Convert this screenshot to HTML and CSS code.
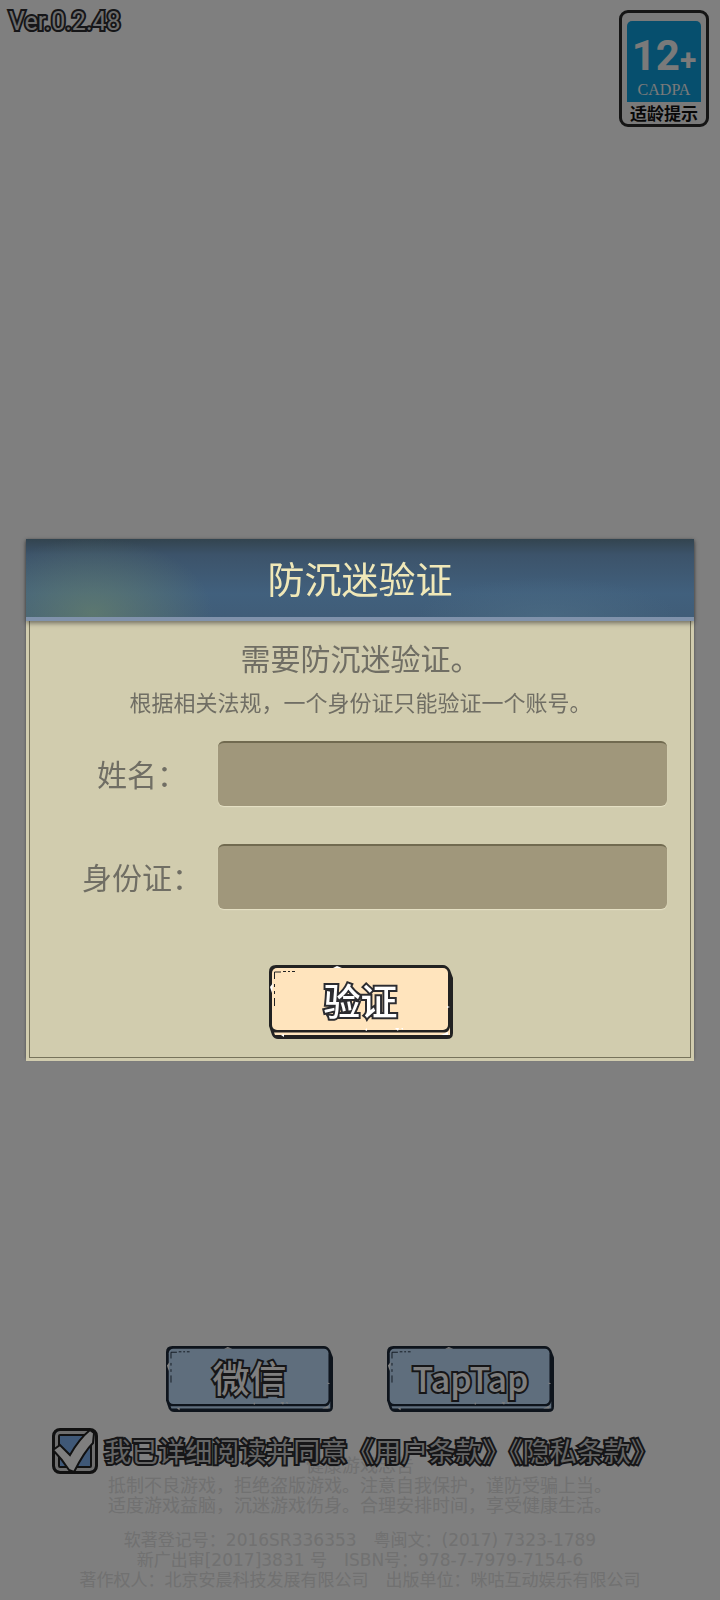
FILE: index.html
```html
<!DOCTYPE html>
<html lang="zh-CN">

<head>
    <meta charset="UTF-8">
    <meta name="viewport" content="width=device-width, initial-scale=1.0">
    <title>防沉迷验证</title>
    <link rel="stylesheet" href="styles.css">
</head>

<body>
    <!-- Shared button plate -->
    <svg class="defs" width="0" height="0" aria-hidden="true">
        <symbol id="plate" viewBox="0 0 184 74" preserveAspectRatio="none">
            <path class="plate-edge" d="M7 0H174Q178 0 181 5L184 13V68Q184 74 178 74H9Q5 74 3 70L0 61V7Q0 0 7 0Z" />
            <path class="plate-lip" d="M5 67.500H176Q180 67 181 62V70H6Z" />
            <rect class="plate-face" x="3" y="3" width="176" height="62" rx="5" />
            <path class="plate-scratch" d="M5.500 41V33M5.500 29V26M5.500 22V19M5.500 14V7H12M14 6.500H17M19 6.500H21M23 6.500H26" />
            <path class="plate-nick" d="M64 3L68 1L73 3ZM1 22L4 18L3 28ZM96 65L98 63V66ZM126 63L130 63L129 66ZM132 63H134V65ZM12 70L15 69V72ZM172 70L179 67V70ZM178 41L181 42L178 43Z" />
        </symbol>
    </svg>

    <div class="page">
        <header class="top-bar">
            <span class="version outlined">Ver.0.2.48</span>
            <div class="age-badge">
                <div class="age-blue">
                    <span class="age-number">12<small>+</small></span>
                    <span class="age-org">CADPA</span>
                </div>
                <span class="age-tip">适龄提示</span>
            </div>
        </header>

        <footer class="bottom">
            <div class="login-buttons">
                <button type="button" class="plate-button login">
                    <svg aria-hidden="true"><use href="#plate" /></svg>
                    <span class="outlined">微信</span>
                </button>
                <button type="button" class="plate-button login">
                    <svg aria-hidden="true"><use href="#plate" /></svg>
                    <span class="outlined latin">TapTap</span>
                </button>
            </div>

            <div class="agreement">
                <span class="tick">
                    <input type="checkbox" id="agree" checked>
                    <svg viewBox="0 0 46 46" aria-hidden="true">
                        <path d="M1 22L8 17L18 27Q27 11 38 2L42 5L41 15Q32 24 22 44L17 42Q10 31 1 22Z" />
                    </svg>
                </span>
                <label for="agree" class="outlined">我已详细阅读并同意<a href="#terms">《用户条款》</a><a href="#privacy">《隐私条款》</a></label>
            </div>

            <!-- Notices required by the regulator -->
            <div class="notice">
                <p class="notice-title">健康游戏忠告</p>
                <p>抵制不良游戏，拒绝盗版游戏。注意自我保护，谨防受骗上当。</p>
                <p>适度游戏益脑，沉迷游戏伤身。合理安排时间，享受健康生活。</p>
            </div>
            <div class="notice registry">
                <p>软著登记号：2016SR336353　粤闽文：(2017) 7323-1789</p>
                <p>新广出审[2017]3831 号　ISBN号：978-7-7979-7154-6</p>
                <p>著作权人：北京安晨科技发展有限公司　出版单位：咪咕互动娱乐有限公司</p>
            </div>
        </footer>
    </div>

    <!-- Verification popup -->
    <div class="overlay">
        <form class="popup">
            <h1 class="popup-title">防沉迷验证</h1>
            <div class="popup-body">
                <p class="lead">需要防沉迷验证。</p>
                <p class="hint">根据相关法规，一个身份证只能验证一个账号。</p>
                <div class="field">
                    <label for="name">姓名：</label>
                    <input type="text" id="name">
                </div>
                <div class="field">
                    <label for="id-card">身份证：</label>
                    <input type="text" id="id-card">
                </div>
                <button type="button" class="plate-button verify">
                    <svg aria-hidden="true"><use href="#plate" /></svg>
                    <span class="outlined">验证</span>
                </button>
            </div>
        </form>
    </div>
</body>

</html>
```
FILE: styles.css
```css
* {
    box-sizing: border-box;
}

body {
    margin: 0;
    background: #fff;
    font-family: "Noto Sans CJK SC", sans-serif;
}

p,
h1 {
    margin: 0;
}

.defs {
    position: absolute;
}

.page {
    display: flex;
    flex-direction: column;
    justify-content: space-between;
    min-height: 100vh;
}

/* White text with a dark outline */
.outlined {
    color: #fff;
    -webkit-text-stroke: 4px #2c2c30;
    paint-order: stroke fill;
}

/* Top bar */
.top-bar {
    display: flex;
    justify-content: space-between;
    align-items: flex-start;
    padding: 10px 11px 0 9px;
}

.version {
    color: #ddd;
    font-family: Roboto, sans-serif;
    font-size: 25px;
    line-height: 24px;
}

.age-badge {
    display: flex;
    flex-direction: column;
    align-items: center;
    width: 90px;
    padding: 8px 5px 0;
    border: 3px solid #2a2a2a;
    border-radius: 9px;
    background: #f4f4f4;
}

.age-blue {
    display: flex;
    flex-direction: column;
    align-items: center;
    width: 100%;
    padding-top: 13px;
    border-radius: 5px 5px 0 0;
    background: #0d9fdc;
    color: #f4f4f4;
}

.age-number {
    font-family: Roboto, sans-serif;
    font-size: 42px;
    font-weight: 700;
    line-height: 44px;
    white-space: nowrap;
}

.age-number small {
    font-size: 30px;
    line-height: 30px;
}

.age-org {
    font-family: "Liberation Serif", serif;
    font-size: 16px;
    line-height: 24px;
}

.age-tip {
    font-size: 17px;
    font-weight: 700;
    line-height: 22px;
    color: #111;
}

/* Buttons */
.plate-button {
    position: relative;
    padding: 0 0 4px;
    border: 0;
    background: none;
    font-family: "Noto Sans CJK SC", sans-serif;
    font-size: 37px;
    font-weight: 500;
    line-height: 48px;
    cursor: pointer;
}

.plate-button svg {
    position: absolute;
    inset: 0;
    width: 100%;
    height: 100%;
}

.plate-button span {
    position: relative;
}

.plate-button .latin {
    font-size: 34px;
}

.plate-edge {
    fill: var(--edge);
}

.plate-face,
.plate-lip {
    fill: var(--face);
}

.plate-scratch {
    fill: none;
    stroke: var(--edge);
    stroke-width: 1;
}

.plate-nick {
    fill: #fff;
}

.verify {
    --edge: #222;
    --face: #ffe4bd;
    width: 184px;
    height: 74px;
}

.login {
    --edge: #1c2838;
    --face: #bedcfa;
    width: 167px;
    height: 66px;
}

/* Bottom area */
.bottom {
    display: flex;
    flex-direction: column;
    align-items: center;
    padding-bottom: 10px;
}

.login-buttons {
    display: flex;
    gap: 54px;
}

.agreement {
    position: relative;
    z-index: 1;
    display: flex;
    align-items: center;
    gap: 6px;
    margin-top: 16px;
    padding-right: 10px;
}

.agreement label {
    color: #ccc;
    font-size: 27px;
    line-height: 28px;
    white-space: nowrap;
}

.agreement a {
    color: inherit;
    text-decoration: none;
}

.tick {
    position: relative;
    width: 46px;
    height: 46px;
}

.tick input {
    appearance: none;
    width: 100%;
    height: 100%;
    margin: 0;
    border: 3px solid #222;
    border-radius: 8px;
    background: #7fb0ee;
    box-shadow: inset 0 0 0 3px #ddd, inset 0 0 0 5px #222;
}

.tick svg {
    position: absolute;
    inset: 0;
    pointer-events: none;
    fill: #fff;
    stroke: #222;
    stroke-width: 2;
}

.tick input:not(:checked) + svg {
    display: none;
}

.notice {
    margin-bottom: 16px;
    font-size: 18px;
    line-height: 20px;
    text-align: center;
    color: #e2e2e2;
}

.registry {
    margin-bottom: 0;
    font-family: "DejaVu Sans", "Noto Sans CJK SC", sans-serif;
    font-size: 17px;
}

.notice-title {
    margin-top: -20px;
}

/* Popup */
.overlay {
    position: fixed;
    inset: 0;
    z-index: 2;
    display: flex;
    align-items: center;
    justify-content: center;
    padding: 0 26px 4px;
    background: rgba(0, 0, 0, 0.5);
}

.popup {
    width: 100%;
    background: #d1ccae;
    box-shadow: 0 1px 3px rgba(0, 0, 0, 0.4);
}

.popup-title {
    position: relative;
    height: 82px;
    border-bottom: 4px solid #8092ab;
    background:
        radial-gradient(ellipse 120px 75px at 10% 95%, rgba(104, 130, 108, 0.7), transparent),
        radial-gradient(ellipse 130px 40px at 78% 100%, rgba(76, 108, 132, 0.7), transparent),
        linear-gradient(#33444f, #3c536a 20%, #41607d 70%, #405d78);
    box-shadow: 0 2px 5px rgba(40, 40, 40, 0.6);
    color: #f0e8b8;
    font-size: 37px;
    font-weight: 400;
    line-height: 78px;
    text-align: center;
}

.popup-body {
    display: flex;
    flex-direction: column;
    align-items: center;
    margin: 0 3px;
    padding: 14px 23px 18px 24px;
    border: 1px solid #77735c;
    border-top: 0;
    outline: 3px solid #d1ccae;
    color: #706e64;
}

.lead {
    font-size: 30px;
    line-height: 44px;
}

.hint {
    margin-bottom: 18px;
    font-size: 22px;
    line-height: 44px;
}

.field {
    display: flex;
    align-items: center;
    width: 100%;
    margin-bottom: 38px;
}

.field label {
    width: 164px;
    padding-left: 12px;
    font-size: 30px;
    text-align: center;
}

.field input {
    flex: 1;
    min-width: 0;
    height: 65px;
    padding: 0 16px;
    border: 0;
    border-top: 2px solid #716a50;
    border-radius: 6px;
    background: #a0977b;
    box-shadow: 0 1px 1px #e6e1c6;
    font-size: 30px;
}

.verify {
    margin-top: 18px;
}
```
